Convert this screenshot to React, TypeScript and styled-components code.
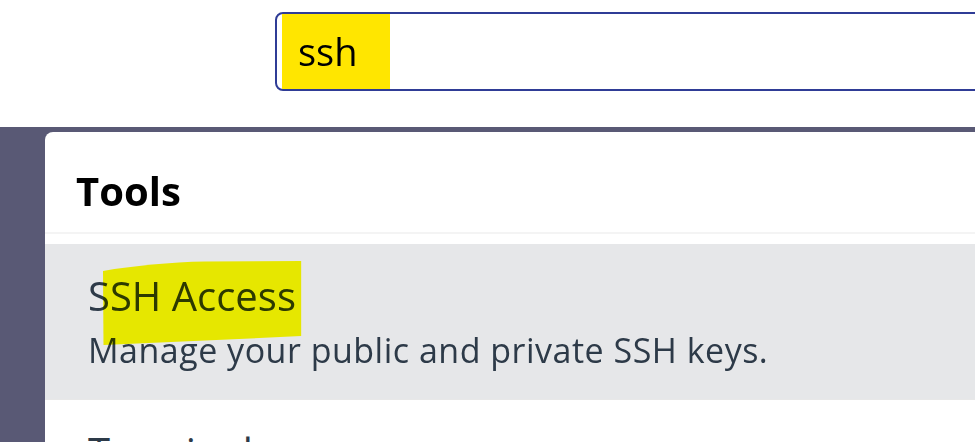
import React from "react";
import styled, { createGlobalStyle } from "styled-components";

const GlobalStyle = createGlobalStyle`
  html, body {
    margin: 0;
    padding: 0;
    background: #ffffff;
    overflow: hidden;
  }
  body {
    font-family: "Open Sans", "Noto Sans", sans-serif;
  }
`;

const results = [
  {
    title: "SSH Access",
    description: "Manage your public and private SSH keys.",
    active: true,
  },
  {
    title: "Terminal",
    description: "Access the server from a command line.",
    active: false,
  },
];

const App = () => {
  return (
    <Page>
      <GlobalStyle />
      <Header>
        <SearchBox>
          <Query>ssh</Query>
        </SearchBox>
      </Header>

      <Main>
        <Card>
          <CardTitle>Tools</CardTitle>
          <ResultList>
            {results.map((item) => (
              <ResultRow key={item.title} $active={item.active}>
                {item.active && (
                  <Marker viewBox="0 0 210 86" preserveAspectRatio="none">
                    <path d="M0 10 C30 5, 70 1, 105 0.5 L204 0 L204 76 L0.5 85 Z" />
                  </Marker>
                )}
                <ResultTitle>{item.title}</ResultTitle>
                <ResultText>{item.description}</ResultText>
              </ResultRow>
            ))}
          </ResultList>
        </Card>
      </Main>
    </Page>
  );
};

const Page = styled.div`
  width: 100%;
  height: 442px;
  overflow: hidden;
`;

const Header = styled.div`
  height: 127px;
  box-sizing: border-box;
  padding: 12px 0 0 275px;
  background: #ffffff;
`;

const SearchBox = styled.div`
  display: flex;
  align-items: stretch;
  width: 900px;
  height: 79px;
  box-sizing: border-box;
  padding: 0 0 0 5px;
  border: 2px solid #2f3c96;
  border-radius: 8px;
  background: #ffffff;
`;

const Query = styled.span`
  display: flex;
  align-items: center;
  padding: 0 32px 0 16px;
  background: #ffe600;
  color: #000000;
  font-size: 38px;
  line-height: 75px;
`;

const Main = styled.div`
  height: 315px;
  box-sizing: border-box;
  padding: 5px 0 0 45px;
  background: #595975;
`;

const Card = styled.div`
  height: 100%;
  background: #ffffff;
  border-top-left-radius: 8px;
`;

const CardTitle = styled.h2`
  margin: 0;
  padding: 32px 0 14px 31px;
  border-bottom: 2px solid #f4f4f4;
  color: #000000;
  font-size: 40px;
  font-weight: 700;
  line-height: 54px;
`;

const ResultList = styled.div`
  padding-top: 10px;
`;

const ResultRow = styled.div<{ $active?: boolean }>`
  position: relative;
  padding: 25px 0 26px 43px;
  background: ${(p) => (p.$active ? "#e6e7e9" : "#ffffff")};
  border-bottom: 1px solid #e8e8e8;
`;

const Marker = styled.svg`
  position: absolute;
  left: 58px;
  top: 17px;
  width: 204px;
  height: 85px;
  fill: #ffff00;
  mix-blend-mode: multiply;
  pointer-events: none;
`;

const ResultTitle = styled.div`
  color: #2d3a48;
  font-size: 40px;
  line-height: 54px;
`;

const ResultText = styled.div`
  margin-top: 5px;
  color: #2d3a48;
  font-size: 34px;
  letter-spacing: 0.5px;
  line-height: 45px;
`;

export default App;
